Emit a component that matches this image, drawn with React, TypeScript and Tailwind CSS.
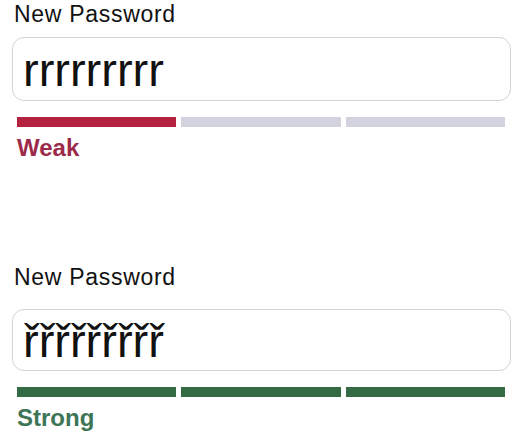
const font = { fontFamily: '"Liberation Sans", Arial, sans-serif' };

type Strength = 'weak' | 'strong';

interface PasswordFieldProps {
  value: string;
  strength: Strength;
  labelGap: string;
  inputHeight: string;
}

function PasswordField({ value, strength, labelGap, inputHeight }: PasswordFieldProps) {
  const filled = strength === 'weak' ? 1 : 3;
  return (
    <div className="flex flex-col">
      <label className="text-[23px] leading-[28px] tracking-[0.7px] text-[#111] pl-[2px]">New Password</label>
      <div
        className={`${labelGap} ${inputHeight} flex items-center rounded-[12px] border-[1.5px] border-[#d4d4da] bg-white pl-[10px] pt-[2px]`}
      >
        <span className="text-[47px] leading-[54px] text-[#111]">{value}</span>
      </div>
      {/* strength meter */}
      <div className="mt-[16px] flex gap-[5px] pl-[5px] pr-[6px]">
        {[0, 1, 2].map((i) => (
          <div
            key={i}
            className={`h-[10px] flex-1 ${
              i < filled
                ? strength === 'weak'
                  ? 'bg-[#b5223f]'
                  : 'bg-[#346b45]'
                : 'bg-[#d3d3df]'
            }`}
          />
        ))}
      </div>
      <div
        className={`mt-[6px] pl-[5px] text-[24px] leading-[30px] font-bold ${
          strength === 'weak' ? 'text-[#9c2a4a]' : 'text-[#3e7556]'
        }`}
      >
        {strength === 'weak' ? 'Weak' : 'Strong'}
      </div>
    </div>
  );
}

export default function App() {
  return (
    <div className="w-[514px] h-[448px] bg-white pl-[12px] pr-[3px] overflow-hidden" style={font}>
      <PasswordField value="rrrrrrrrr" strength="weak" labelGap="mt-[9px]" inputHeight="h-[64px]" />
      <div className="mt-[100px]">
        <PasswordField value="řřřřřřřřř" strength="strong" labelGap="mt-[18px]" inputHeight="h-[62px]" />
      </div>
    </div>
  );
}
